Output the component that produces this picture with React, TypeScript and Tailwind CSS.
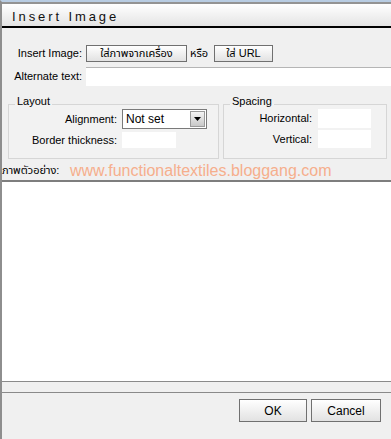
const font = { fontFamily: '"Liberation Sans", "Noto Sans Thai", Tahoma, sans-serif' }

function Btn({ label, className }: { label: string; className: string }) {
  return (
    <button
      className={`flex items-center justify-center border border-[#707070] bg-gradient-to-b from-white to-[#e2e2e2] text-[11px] text-black ${className}`}
    >
      {label}
    </button>
  )
}

export default function App() {
  return (
    <div className="w-[391px] h-[439px] overflow-hidden bg-[#f0f0f0] text-[11px] text-black" style={font}>
      <div className="flex h-full flex-col border-t-2 border-l-2 border-t-[#b8cce2] border-l-[#8e8e8e]">
        {/* title bar */}
        <div className="h-[26px] shrink-0 border-t-2 border-b-2 border-t-[#939393] border-b-black bg-gradient-to-b from-white to-[#e4e4e4] pl-[10px] pt-[5px]">
          <span className="text-[13px] leading-[13px] tracking-[2.9px] text-[#111]">Insert Image</span>
        </div>

        {/* source row */}
        <div className="mt-[17px] flex h-[17px] items-center">
          <span className="w-[80px] text-right">Insert Image:</span>
          <Btn label="ใส่ภาพจากเครื่อง" className="ml-[4px] h-[17px] w-[101px]" />
          <span className="ml-[3px] w-[24px]">หรือ</span>
          <Btn label="ใส่ URL" className="h-[17px] w-[59px]" />
        </div>

        {/* alt text row */}
        <div className="mt-[5px] flex h-[19px] items-center">
          <span className="w-[80px] text-right">Alternate text:</span>
          <div className="ml-[4px] h-[19px] flex-1 border-t border-t-[#b5b5b5] bg-white" />
        </div>

        {/* fieldsets */}
        <div className="mt-[9px] flex h-[64px] gap-[4px] pl-[6px]">
          <fieldset className="w-[211px] border border-[#d6d6d6] bg-[#f2f2f2] px-0 pb-[9px]">
            <legend className="ml-[6px] px-[2px] pb-[6px] leading-[12px]">Layout</legend>
            <div className="-mt-[4px] flex h-[20px] items-center">
              <span className="w-[108px] text-right">Alignment:</span>
              <div className="ml-[5px] flex h-[20px] w-[85px] items-center border border-[#7a7a7a] bg-white">
                <span className="flex-1 pl-[3px] text-[12px]">Not set</span>
                <div className="mr-[1px] flex h-[16px] w-[15px] items-center justify-center border border-[#9a9a9a] bg-gradient-to-b from-[#f4f4f4] to-[#c8c8c8]">
                  <svg width="7" height="4" viewBox="0 0 7 4">
                    <path d="M0 0h7L3.5 4z" fill="#000" />
                  </svg>
                </div>
              </div>
            </div>
            <div className="mt-[3px] flex h-[16px] items-center">
              <span className="w-[108px] text-right">Border thickness:</span>
              <div className="ml-[5px] h-[16px] w-[54px] bg-white" />
            </div>
          </fieldset>

          <fieldset className="w-[164px] border border-[#d6d6d6] bg-[#f2f2f2] px-0 pb-[9px]">
            <legend className="ml-[6px] px-[2px] pb-[6px] leading-[12px]">Spacing</legend>
            <div className="-mt-[4px] flex h-[19px] items-center">
              <span className="w-[88px] text-right">Horizontal:</span>
              <div className="ml-[6px] h-[19px] w-[53px] bg-white" />
            </div>
            <div className="mt-[2px] flex h-[18px] items-center">
              <span className="w-[88px] text-right">Vertical:</span>
              <div className="ml-[6px] h-[18px] w-[53px] bg-white" />
            </div>
          </fieldset>
        </div>

        {/* preview label */}
        <div className="relative flex h-[21px] items-end pb-[2px]">
          <span>ภาพตัวอย่าง:</span>
          <span className="absolute left-[68px] top-0 text-[16px] text-[#f6ae8c]">
            www.functionaltextiles.bloggang.com
          </span>
        </div>

        {/* preview box */}
        <div className="h-[201px] shrink-0 border-t-2 border-t-[#7e7e7e] bg-white" />

        <div className="h-[12px] shrink-0 border-y border-[#8a8a8a] bg-[#f0f0f0]" />

        {/* footer */}
        <div className="flex flex-1 justify-end gap-[4px] pr-[10px] pt-[6px]">
          <Btn label="OK" className="h-[23px] w-[68px] text-[12px]" />
          <Btn label="Cancel" className="h-[23px] w-[70px] text-[12px]" />
        </div>
      </div>
    </div>
  )
}
